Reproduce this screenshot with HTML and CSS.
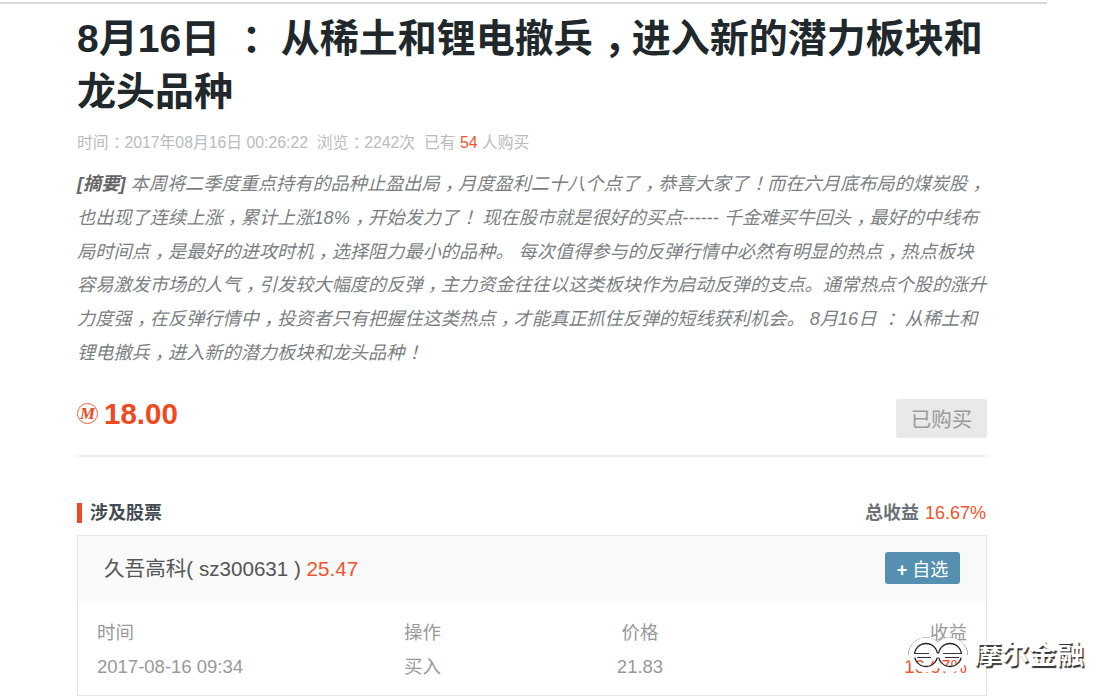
FILE: index.html
```html
<!DOCTYPE html>
<html lang="zh-CN">
<head>
    <meta charset="UTF-8">
    <title>8月16日 ：从稀土和锂电撤兵，进入新的潜力板块和龙头品种</title>
    <link rel="stylesheet" href="styles.css">
</head>
<body>
    <div class="page">
        <h1 class="title">8月16日 <span class="pm">：</span> 从稀土和锂电撤兵<span class="pm">，</span>进入新的潜力板块和龙头品种</h1>
        <div class="meta">时间<span class="pm">：</span>2017年08月16日 00:26:22 &nbsp;浏览<span class="pm">：</span>2242次 &nbsp;已有 <span class="red">54</span> 人购买</div>
        <p class="summary"><b class="tag">[摘要]</b> 本周将二季度重点持有的品种止盈出局<span class="pm">，</span>月度盈利二十八个点了<span class="pm">，</span>恭喜大家了<span class="pm">！</span>而在六月底布局的煤炭股<span class="pm">，</span>也出现了连续上涨<span class="pm">，</span>累计上涨18%<span class="pm">，</span>开始发力了<span class="pm">！</span> 现在股市就是很好的买点------ 千金难买牛回头<span class="pm">，</span>最好的中线布局时间点<span class="pm">，</span>是最好的进攻时机<span class="pm">，</span>选择阻力最小的品种。 每次值得参与的反弹行情中必然有明显的热点<span class="pm">，</span>热点板块容易激发市场的人气<span class="pm">，</span>引发较大幅度的反弹<span class="pm">，</span>主力资金往往以这类板块作为启动反弹的支点。通常热点个股的涨升力度强<span class="pm">，</span>在反弹行情中<span class="pm">，</span>投资者只有把握住这类热点<span class="pm">，</span>才能真正抓住反弹的短线获利机会。 8月16日 <span class="pm">：</span> 从稀土和锂电撤兵<span class="pm">，</span>进入新的潜力板块和龙头品种<span class="pm">！</span></p>

        <div class="buy-row">
            <div class="price"><span class="coin"><span class="coin-m">M</span></span>18.00</div>
            <button class="bought" type="button">已购买</button>
        </div>

        <div class="section-head">
            <h3 class="section-title">涉及股票</h3>
            <div class="total"><b>总收益</b> <span class="red">16.67%</span></div>
        </div>

        <div class="stock-card">
            <div class="stock-head">
                <div class="stock-name">久吾高科( sz300631 ) <span class="red">25.47</span></div>
                <button class="add-btn" type="button"><b>+</b> 自选</button>
            </div>
            <div class="trade-grid">
                <div>时间</div><div>操作</div><div class="mid">价格</div><div class="end">收益</div>
                <div>2017-08-16 09:34</div><div>买入</div><div class="mid">21.83</div><div class="end red">16.67%</div>
            </div>
        </div>
    </div>

    <!-- watermark -->
    <div class="watermark">
        <svg class="wm-logo" width="62" height="38" viewBox="0 0 62 38">
            <g fill="none" stroke="#555" stroke-width="1">
                <path d="M1.5 19a17.5 17.5 0 0 1 29.5 -12.5a17.5 17.5 0 0 1 29.5 12.5"/>
            </g>
            <g fill="none" stroke="#fff" stroke-width="6">
                <circle cx="19" cy="19" r="14.5"/>
                <circle cx="43" cy="19" r="14.5"/>
            </g>
            <g fill="none" stroke="#222" stroke-width="1.3">
                <circle cx="19" cy="19" r="11.5"/>
                <circle cx="43" cy="19" r="11.5"/>
            </g>
            <path d="M3 19.5h56" stroke="#fff" stroke-width="4"/>
            <path d="M7 17.5h15M36 17.5h19M10 21.5h14M38 21.5h14" stroke="#333" stroke-width="1"/>
        </svg>
        <span class="wm-text">摩尔金融</span>
    </div>
</body>
</html>
```

FILE: styles.css
```css
body {
    margin: 0;
    background-color: #fff;
    font-family: "Liberation Sans", "Noto Sans CJK SC", sans-serif;
    color: #999;
    height: 699px;
    overflow: hidden;
    position: relative;
}

.page {
    width: 910px;
    margin-top: 2px;
    padding: 8px 60px 0 77px;
    border-top: 2px solid #d8d8d8;
}

/* full width punctuation sits in the middle of its cell on the original */
.pm {
    position: relative;
    left: 0.28em;
}

.red {
    color: #f0532d;
}

.title {
    margin: 0;
    font-size: 39px;
    line-height: 53px;
    font-weight: bold;
    color: #20282c;
}

.meta {
    margin-top: 13px;
    font-size: 15.8px;
    line-height: 24px;
    color: #b8bcc0;
}

.summary {
    margin: 13px 0 0;
    font-size: 18.2px;
    line-height: 33.8px;
    font-style: italic;
    color: #7b7f83;
}

.tag {
    color: #666;
}

.buy-row {
    display: flex;
    justify-content: space-between;
    align-items: flex-start;
    margin-top: 28px;
    padding-bottom: 17px;
    border-bottom: 2px solid #eee;
}

.price {
    display: flex;
    align-items: center;
    gap: 6px;
    font-size: 29.5px;
    line-height: 30px;
    font-weight: bold;
    color: #f0481f;
}

.coin {
    display: flex;
    justify-content: center;
    align-items: center;
    width: 19px;
    height: 19px;
    border: 1.5px solid #f0603c;
    border-radius: 50%;
}

.coin-m {
    font-family: "Liberation Serif", serif;
    font-size: 17px;
    font-style: italic;
    font-weight: bold;
    line-height: 1;
}

.bought {
    width: 91px;
    height: 39px;
    padding: 0;
    border: none;
    border-radius: 3px;
    background-color: #e9e9e9;
    color: #999;
    font-family: inherit;
    font-size: 20.5px;
}

.section-head {
    display: flex;
    justify-content: space-between;
    align-items: center;
    margin-top: 46px;
    height: 20px;
}

.section-title {
    margin: 0;
    padding-left: 8px;
    border-left: 5px solid #f0481f;
    font-size: 18px;
    line-height: 20px;
    font-weight: bold;
    color: #444c52;
}

.total {
    padding-right: 1px;
    font-size: 18px;
    line-height: 20px;
}

.total b {
    margin-right: 1px;
    color: #6b7277;
}

.stock-card {
    margin-top: 12px;
    height: 159px;
    border: 1px solid #e6e6e6;
}

.stock-head {
    display: flex;
    justify-content: space-between;
    align-items: center;
    height: 65px;
    padding: 0 26px;
    background-color: #f9f9f9;
}

.stock-name {
    padding-bottom: 2px;
    font-size: 20.6px;
    color: #555;
}

.add-btn {
    width: 75px;
    height: 32px;
    padding: 0;
    border: none;
    border-radius: 3px;
    background-color: #5590b0;
    color: #fff;
    font-family: inherit;
    font-size: 18px;
}

.trade-grid {
    display: grid;
    grid-template-columns: 307px 150px 172px 1fr;
    grid-auto-rows: 34px;
    line-height: 34px;
    padding: 15px 19px 0;
    font-size: 18.5px;
}

.mid {
    text-align: center;
}

.end {
    text-align: right;
}

.watermark {
    position: absolute;
    left: 907px;
    top: 636px;
    display: flex;
    align-items: center;
    gap: 5px;
}

.wm-text {
    font-size: 27.5px;
    font-weight: bold;
    line-height: 38px;
    color: #fff;
    text-shadow: 1.5px 1.5px 1px #333;
}
```
